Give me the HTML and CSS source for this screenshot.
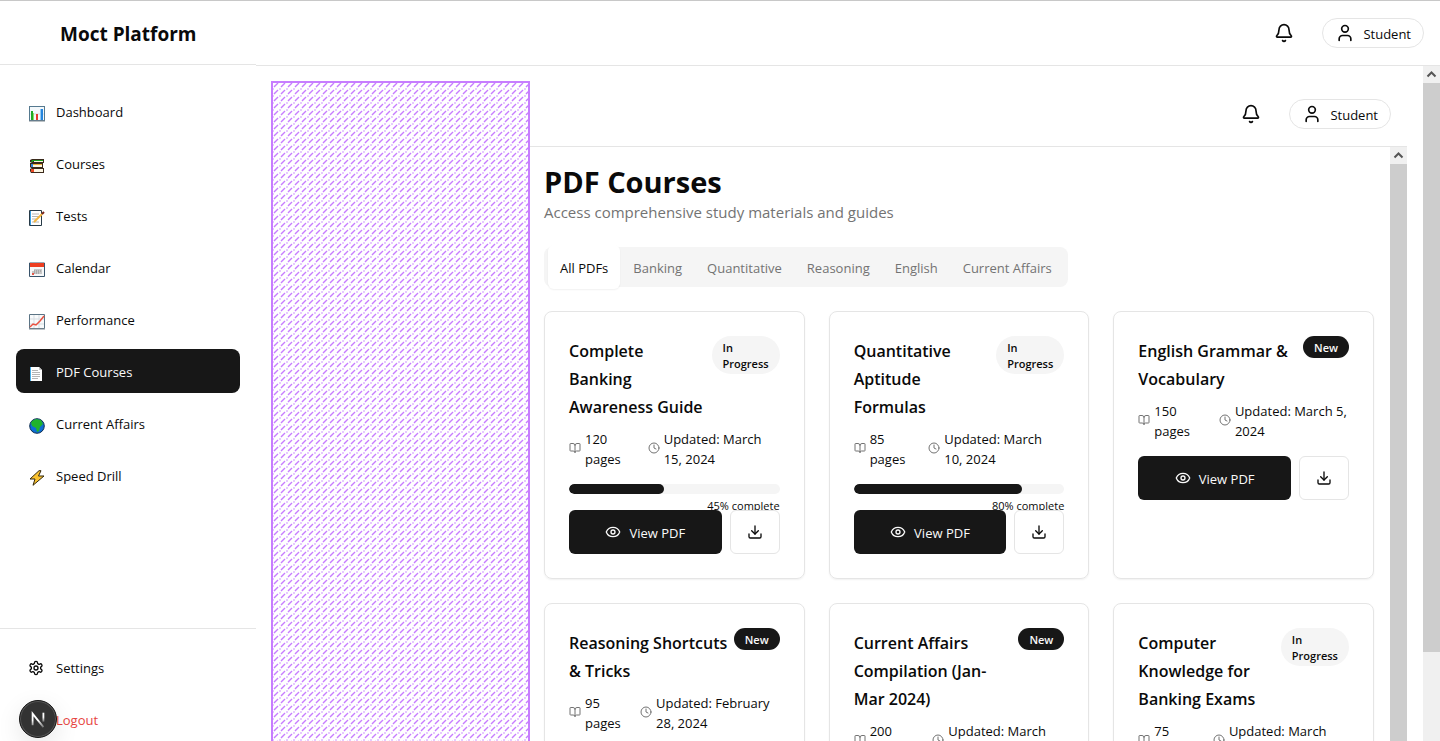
FILE: index.html
```html
<!DOCTYPE html>
<html lang="en">
<head>
<meta charset="utf-8">
<meta name="viewport" content="width=device-width, initial-scale=1">
<title>PDF Courses - Moct Platform</title>
<link rel="stylesheet" href="styles.css">
</head>
<body>
<svg class="sprite" aria-hidden="true">
  <symbol id="bell" viewBox="0 0 24 24"><path d="M10.3 21a1.94 1.94 0 0 0 3.4 0"/><path d="M3.3 15.3A1 1 0 0 0 4 17h16a1 1 0 0 0 .7-1.7C19.4 14 18 12.500 18 8A6 6 0 0 0 6 8c0 4.500-1.400 6-2.700 7.300"/></symbol>
  <symbol id="user" viewBox="0 0 24 24"><path d="M19 21v-2a4 4 0 0 0-4-4H9a4 4 0 0 0-4 4v2"/><circle cx="12" cy="7" r="4"/></symbol>
  <symbol id="gear" viewBox="0 0 24 24"><path d="M12.220 2h-.44a2 2 0 0 0-2 2v.18a2 2 0 0 1-1 1.730l-.43.25a2 2 0 0 1-2 0l-.15-.08a2 2 0 0 0-2.730.73l-.22.38a2 2 0 0 0 .73 2.730l.15.1a2 2 0 0 1 1 1.720v.51a2 2 0 0 1-1 1.740l-.15.09a2 2 0 0 0-.73 2.730l.22.38a2 2 0 0 0 2.730.73l.15-.08a2 2 0 0 1 2 0l.43.25a2 2 0 0 1 1 1.730V20a2 2 0 0 0 2 2h.44a2 2 0 0 0 2-2v-.18a2 2 0 0 1 1-1.730l.43-.25a2 2 0 0 1 2 0l.15.08a2 2 0 0 0 2.730-.73l.22-.39a2 2 0 0 0-.73-2.730l-.15-.08a2 2 0 0 1-1-1.740v-.5a2 2 0 0 1 1-1.740l.15-.09a2 2 0 0 0 .73-2.730l-.22-.38a2 2 0 0 0-2.730-.73l-.15.08a2 2 0 0 1-2 0l-.43-.25a2 2 0 0 1-1-1.730V4a2 2 0 0 0-2-2z"/><circle cx="12" cy="12" r="3"/></symbol>
  <symbol id="book" viewBox="0 0 24 24"><path d="M12 7v14"/><path d="M3 18a1 1 0 0 1-1-1V4a1 1 0 0 1 1-1h5a4 4 0 0 1 4 4 4 4 0 0 1 4-4h5a1 1 0 0 1 1 1v13a1 1 0 0 1-1 1h-6a3 3 0 0 0-3 3 3 3 0 0 0-3-3z"/></symbol>
  <symbol id="clock" viewBox="0 0 24 24"><circle cx="12" cy="12" r="10"/><path d="M12 6v6l4 2"/></symbol>
  <symbol id="eye" viewBox="0 0 24 24"><path d="M2.060 12.350a1 1 0 0 1 0-.7 10.750 10.750 0 0 1 19.880 0 1 1 0 0 1 0 .7 10.750 10.750 0 0 1-19.880 0"/><circle cx="12" cy="12" r="3"/></symbol>
  <symbol id="download" viewBox="0 0 24 24"><path d="M21 15v4a2 2 0 0 1-2 2H5a2 2 0 0 1-2-2v-4"/><path d="M7 10l5 5 5-5"/><path d="M12 15V3"/></symbol>
  <symbol id="chevron" viewBox="0 0 17 17"><path d="M4.500 10.500l4-4 4 4"/></symbol>
</svg>

<div class="shell">
  <aside class="sidebar">
    <div class="brand">Moct Platform</div>
    <nav class="nav">
      <a class="nav-link" href="#"><svg class="emoji" viewBox="0 0 16 16"><rect x=".5" y=".5" width="15" height="14" fill="#f3f8fb" stroke="#55798f"/><path d="M1 8h14" stroke="#d3dce2"/><path d="M2 5h2v9H2z" fill="#1eaa24"/><path d="M4 7h1v7H4z" fill="#8edb62"/><path d="M7 8h2v6H7z" fill="#e5392c"/><path d="M11 3h3v11h-3z" fill="#2585df"/><path d="M11 3h1v11h-1z" fill="#91c9f4"/><path d="M0 15h16" stroke="#78838a"/></svg>Dashboard</a>
      <a class="nav-link" href="#"><svg class="emoji" viewBox="0 0 16 16"><path d="M3 1h12v4H3L1 4V2zM1 5h13v5H2L1 9zM3 10h12v5H2l-1-2v-2z" fill="#3a2a1c"/><path d="M5 2h9v2H5zM4 6h9v3H4zM5 11h9v3H5z" fill="#fdf6e3"/><path d="M3 2h11v1H4v1H2z" fill="#1ca51f"/><path d="M2 6h2v3H2z" fill="#3385db"/><path d="M2 11h3v3H2z" fill="#e84824"/><path d="M4 6.500h9" stroke="#efb33b"/></svg>Courses</a>
      <a class="nav-link" href="#"><svg class="emoji" viewBox="0 0 16 16"><path d="M.5.5h12v15H.5z" fill="#fff" stroke="#273a47"/><path d="M1.500 1v14" stroke="#3aa1e6"/><path d="M3 4h7M3 6.500h7M3 9h4M3 12h7" stroke="#b4b4b4"/><path d="M5 12l8-8" stroke="#f3b53e" stroke-width="2"/><path d="M13 4l2-2" stroke="#7a2318" stroke-width="2"/></svg>Tests</a>
      <a class="nav-link" href="#"><svg class="emoji" viewBox="0 0 16 16"><path d="M.5 1h15v13.500H.5z" fill="#f6f7f8" stroke="#38536a"/><path d="M1 1h14v4H1z" fill="#ed3d20"/><path d="M5 7h8v5H3V9h2z" fill="#c8c8c8"/><path d="M5 9h8M5 11h6" stroke="#8d8d8d" stroke-dasharray="1 1"/><path d="M3 11h2v2H3z" fill="#e45849"/></svg>Calendar</a>
      <a class="nav-link" href="#"><svg class="emoji" viewBox="0 0 16 16"><path d="M.5.5h15v14H.5z" fill="#f8fafb" stroke="#5b7485"/><path d="M5 1v13M10 1v13M1 5h14M1 10h14" stroke="#d7dde2"/><path d="M1 13l3-3 3 1 4-4 4-5" fill="none" stroke="#ea5140" stroke-width="1.500"/><path d="M0 15h16" stroke="#808a91"/></svg>Performance</a>
      <a class="nav-link active" href="#" aria-current="page"><svg class="emoji" viewBox="0 0 16 16"><path d="M1 1h9l3 3v11H1z" fill="#fff"/><path d="M1 1h1v14H1z" fill="#49aee7"/><path d="M10 1v3h3" fill="#c8c8c8"/><path d="M3 4.500h6M3 6.500h8M3 8.500h8M3 10.500h8M3 12.500h6" stroke="#b5b5b5"/></svg>PDF Courses</a>
      <a class="nav-link" href="#"><svg class="emoji" viewBox="0 0 16 16"><circle cx="8" cy="8" r="7.300" fill="#0e6ed5" stroke="#122f50"/><path d="M3 3l4-2 5 1 2 4-3 3-1 4-2 1-1-4-4-2-1-3z" fill="#20b32b"/></svg>Current Affairs</a>
      <a class="nav-link" href="#"><svg class="emoji" viewBox="0 0 16 16"><path d="M10 .7L1 9h5l-2 6.300L15 6H9.500L12 .7z" fill="#fac22f" stroke="#33280d"/></svg>Speed Drill</a>
    </nav>
    <div class="side-foot">
      <a class="nav-link" href="#"><svg class="icon i16"><use href="#gear"/></svg>Settings</a>
      <button class="nav-link logout" type="button">Logout</button>
    </div>
  </aside>

  <div class="column">
    <header class="topbar">
      <button class="bell" type="button" aria-label="Notifications"><svg class="icon i20"><use href="#bell"/></svg></button>
      <button class="account" type="button"><svg class="icon i20"><use href="#user"/></svg><span>Student</span></button>
    </header>
    <div class="scroll-area">
      <div class="outer">
        <div class="overlay" aria-hidden="true"><svg width="100%" height="100%"><defs><pattern id="hatch" width="7" height="7" patternUnits="userSpaceOnUse"><path d="M1 4L5 0M1 11L5 7" stroke="#c77dff" stroke-width="1.400"/><path d="M-1 5h2v2h-2zM6 5h2v2H6z" fill="#e6caff"/></pattern></defs><rect width="100%" height="100%" fill="url(#hatch)"/></svg></div>
        <div class="column">
          <header class="topbar">
            <button class="bell" type="button" aria-label="Notifications"><svg class="icon i20"><use href="#bell"/></svg></button>
            <button class="account" type="button"><svg class="icon i20"><use href="#user"/></svg><span>Student</span></button>
          </header>
          <div class="scroll-area">
            <main class="content">
              <h1>PDF Courses</h1>
              <p class="lead">Access comprehensive study materials and guides</p>
              <div class="tabs" role="tablist">
                <button class="tab selected" type="button" role="tab" aria-selected="true">All PDFs</button>
                <button class="tab" type="button" role="tab">Banking</button>
                <button class="tab" type="button" role="tab">Quantitative</button>
                <button class="tab" type="button" role="tab">Reasoning</button>
                <button class="tab" type="button" role="tab">English</button>
                <button class="tab" type="button" role="tab">Current Affairs</button>
              </div>
              <div class="cards">
                <article class="card">
                  <div class="card-head"><h2>Complete<br>Banking<br>Awareness Guide</h2><span class="badge">In Progress</span></div>
                  <div class="meta"><span class="fact"><svg class="icon i12"><use href="#book"/></svg><span>120 pages</span></span><span class="fact"><svg class="icon i12"><use href="#clock"/></svg><span>Updated: March 15,&nbsp;2024</span></span></div>
                  <div class="progress"><div class="track"><div class="fill" style="width:45%"></div></div><div class="done">45% complete</div></div>
                  <div class="actions"><button class="view" type="button"><svg class="icon i16"><use href="#eye"/></svg><span>View PDF</span></button><button class="save" type="button" aria-label="Download"><svg class="icon i16"><use href="#download"/></svg></button></div>
                </article>
                <article class="card">
                  <div class="card-head"><h2>Quantitative<br>Aptitude<br>Formulas</h2><span class="badge">In Progress</span></div>
                  <div class="meta"><span class="fact"><svg class="icon i12"><use href="#book"/></svg><span>85 pages</span></span><span class="fact"><svg class="icon i12"><use href="#clock"/></svg><span>Updated: March 10,&nbsp;2024</span></span></div>
                  <div class="progress"><div class="track"><div class="fill" style="width:80%"></div></div><div class="done">80% complete</div></div>
                  <div class="actions"><button class="view" type="button"><svg class="icon i16"><use href="#eye"/></svg><span>View PDF</span></button><button class="save" type="button" aria-label="Download"><svg class="icon i16"><use href="#download"/></svg></button></div>
                </article>
                <article class="card">
                  <div class="card-head"><h2>English Grammar &amp; Vocabulary</h2><span class="badge new">New</span></div>
                  <div class="meta"><span class="fact"><svg class="icon i12"><use href="#book"/></svg><span>150 pages</span></span><span class="fact"><svg class="icon i12"><use href="#clock"/></svg><span>Updated: March 5, 2024</span></span></div>
                  <div class="actions"><button class="view" type="button"><svg class="icon i16"><use href="#eye"/></svg><span>View PDF</span></button><button class="save" type="button" aria-label="Download"><svg class="icon i16"><use href="#download"/></svg></button></div>
                </article>
                <article class="card">
                  <div class="card-head"><h2>Reasoning Shortcuts &amp; Tricks</h2><span class="badge new">New</span></div>
                  <div class="meta"><span class="fact"><svg class="icon i12"><use href="#book"/></svg><span>95 pages</span></span><span class="fact"><svg class="icon i12"><use href="#clock"/></svg><span>Updated: February 28,&nbsp;2024</span></span></div>
                  <div class="actions"><button class="view" type="button"><svg class="icon i16"><use href="#eye"/></svg><span>View PDF</span></button><button class="save" type="button" aria-label="Download"><svg class="icon i16"><use href="#download"/></svg></button></div>
                </article>
                <article class="card">
                  <div class="card-head"><h2>Current Affairs Compilation (Jan-<br>Mar 2024)</h2><span class="badge new">New</span></div>
                  <div class="meta"><span class="fact"><svg class="icon i12"><use href="#book"/></svg><span>200 pages</span></span><span class="fact"><svg class="icon i12"><use href="#clock"/></svg><span>Updated: March 12,&nbsp;2024</span></span></div>
                  <div class="actions"><button class="view" type="button"><svg class="icon i16"><use href="#eye"/></svg><span>View PDF</span></button><button class="save" type="button" aria-label="Download"><svg class="icon i16"><use href="#download"/></svg></button></div>
                </article>
                <article class="card">
                  <div class="card-head"><h2>Computer<br>Knowledge for<br>Banking Exams</h2><span class="badge">In Progress</span></div>
                  <div class="meta"><span class="fact"><svg class="icon i12"><use href="#book"/></svg><span>75 pages</span></span><span class="fact"><svg class="icon i12"><use href="#clock"/></svg><span>Updated: March 18,&nbsp;2024</span></span></div>
                  <div class="actions"><button class="view" type="button"><svg class="icon i16"><use href="#eye"/></svg><span>View PDF</span></button><button class="save" type="button" aria-label="Download"><svg class="icon i16"><use href="#download"/></svg></button></div>
                </article>
              </div>
            </main>
            <div class="scrollbar" aria-hidden="true"><svg class="arrow"><use href="#chevron"/></svg><div class="thumb full"></div></div>
          </div>
        </div>
      </div>
      <div class="scrollbar" aria-hidden="true"><svg class="arrow"><use href="#chevron"/></svg><div class="thumb"></div></div>
    </div>
  </div>
</div>
<button class="dev-badge" type="button" aria-label="Developer tools"><svg viewBox="0 0 40 40"><defs><linearGradient id="fadeA" x1="0" y1="0" x2="0" y2="1"><stop offset=".5" stop-color="#fff"/><stop offset="1" stop-color="#fff" stop-opacity=".3"/></linearGradient></defs><path d="M14 27V14l12 15" fill="none" stroke="url(#fadeA)" stroke-width="2"/><rect x="25" y="13" width="2" height="10" fill="url(#fadeA)"/></svg></button>
</body>
</html>
```
FILE: styles.css
```css
* { box-sizing: border-box; }
body {
  margin: 0;
  height: 100vh;
  overflow: hidden;
  background: #fff;
  color: #0a0a0a;
  font: 13px/20px "Open Sans", "Noto Sans", sans-serif;
}
button { font: inherit; color: inherit; background: none; border: 0; padding: 0; cursor: pointer; }
a { color: inherit; text-decoration: none; }
h1, h2, p { margin: 0; }
svg { display: block; flex: none; }
.sprite { position: absolute; width: 0; height: 0; }
.icon { fill: none; stroke: currentColor; stroke-width: 2; stroke-linecap: round; stroke-linejoin: round; }
.i12 { width: 12px; height: 12px; }
.i16 { width: 16px; height: 16px; }
.i20 { width: 20px; height: 20px; }

.shell { display: flex; height: 100vh; border-top: 1px solid #c8c8c8; overflow: hidden; }
.sidebar { flex: 0 0 256px; display: flex; flex-direction: column; height: calc(100vh + 16px); }
.brand {
  height: 64px;
  padding-left: 60px;
  border-bottom: 1px solid #e5e5e5;
  font-size: 19px;
  font-weight: 700;
  line-height: 66px;
  white-space: nowrap;
}
.nav { flex: 1; display: flex; flex-direction: column; gap: 8px; padding: 24px 16px; }
.nav-link { display: flex; align-items: center; gap: 12px; width: 100%; height: 44px; padding: 0 12px; border-radius: 8px; text-align: left; }
.nav .nav-link { padding-top: 2px; }
.nav-link.active { background: #171717; color: #fafafa; }
.nav-link .emoji { width: 16px; height: 16px; margin: 4px -1px 0 1px; }
.side-foot { display: flex; flex-direction: column; gap: 8px; padding: 17px 16px 16px; border-top: 1px solid #e5e5e5; }
.logout { padding-left: 40px; color: #e7453f; }

.column { flex: 1; min-width: 0; display: flex; flex-direction: column; }
.topbar { flex: none; display: flex; align-items: center; justify-content: flex-end; gap: 28px; height: 65px; padding: 0 16px; border-bottom: 1px solid #e5e5e5; }
.account { display: flex; align-items: center; gap: 8px; height: 30px; padding: 0 12px; border: 1px solid #e5e5e5; border-radius: 15px; }
.account span, .view span { padding-top: 2px; }
.scroll-area { flex: 1; min-height: 0; display: flex; overflow: hidden; }
.outer { flex: 1; min-width: 0; display: flex; padding: 16px 16px 0; }
.overlay { z-index: 1; flex: 0 0 259px; margin: -1px 0 0 -1px; border: 2px solid #c77dff; border-bottom: 0; }
.outer .column { margin-left: -2px; }
.scrollbar { flex: 0 0 17px; display: flex; flex-direction: column; background: #f0f0f0; }
.arrow { width: 17px; height: 17px; fill: none; stroke: #555; stroke-width: 2; }
.thumb { height: 569px; background: #cdcdcd; }
.thumb.full { height: 100%; }

.content { flex: 1; min-width: 0; padding: 15px 16px; }
h1 { font-size: 29px; line-height: 40px; font-weight: 700; }
.lead { font-size: 15px; line-height: 20px; color: #737373; }
.tabs { display: inline-flex; align-items: center; gap: 1px; height: 40px; margin: 25px 0 24px; padding: 0 4px; border-radius: 8px; background: #f5f5f5; color: #737373; vertical-align: top; }
.tab { height: 44px; padding: 2px 12px 0; border-radius: 6px; }
.tab.selected { background: #fff; color: #0a0a0a; box-shadow: 0 1px 2px rgba(0, 0, 0, .06); }

.cards { display: grid; grid-template-columns: repeat(3, minmax(0, 1fr)); gap: 24px; }
.card { padding: 24px; border: 1px solid #e5e5e5; border-radius: 8px; box-shadow: 0 1px 2px rgba(0, 0, 0, .06); }
.card-head { display: flex; justify-content: space-between; align-items: flex-start; }
h2 { flex: 1; padding-top: 1px; font-size: 16px; line-height: 28px; font-weight: 600; }
.badge { flex: none; width: min-content; padding: 4px 11px 2px; border-radius: 20px; background: #f5f5f5; font-size: 11px; line-height: 16px; font-weight: 600; }
.badge.new { background: #171717; color: #fafafa; }
.meta { display: flex; gap: 18px; margin: 8px 0 15px; }
.fact { display: flex; align-items: center; gap: 4px; }
.fact .icon { margin-bottom: 2px; color: #737373; }
.progress { height: 10px; margin-bottom: 16px; }
.track { height: 10px; border-radius: 5px; background: #f5f5f5; overflow: hidden; }
.fill { height: 100%; border-radius: 5px; background: #171717; }
.done { margin-top: 4px; font-size: 11px; line-height: 16px; text-align: right; }
.actions { position: relative; display: flex; gap: 8px; }
.view { flex: 1; display: flex; align-items: center; justify-content: center; gap: 8px; height: 44px; border-radius: 6px; background: #171717; color: #fafafa; }
.save { flex: 0 0 50px; display: flex; align-items: center; justify-content: center; height: 44px; border: 1px solid #e5e5e5; border-radius: 6px; background: #fff; }

.dev-badge { position: fixed; left: 19px; bottom: 3px; width: 38px; height: 38px; border: 1px solid #171717; border-radius: 50%; background: #333; box-shadow: inset 0 0 0 1px #555, 0 8px 24px rgba(0, 0, 0, .1); }
```
